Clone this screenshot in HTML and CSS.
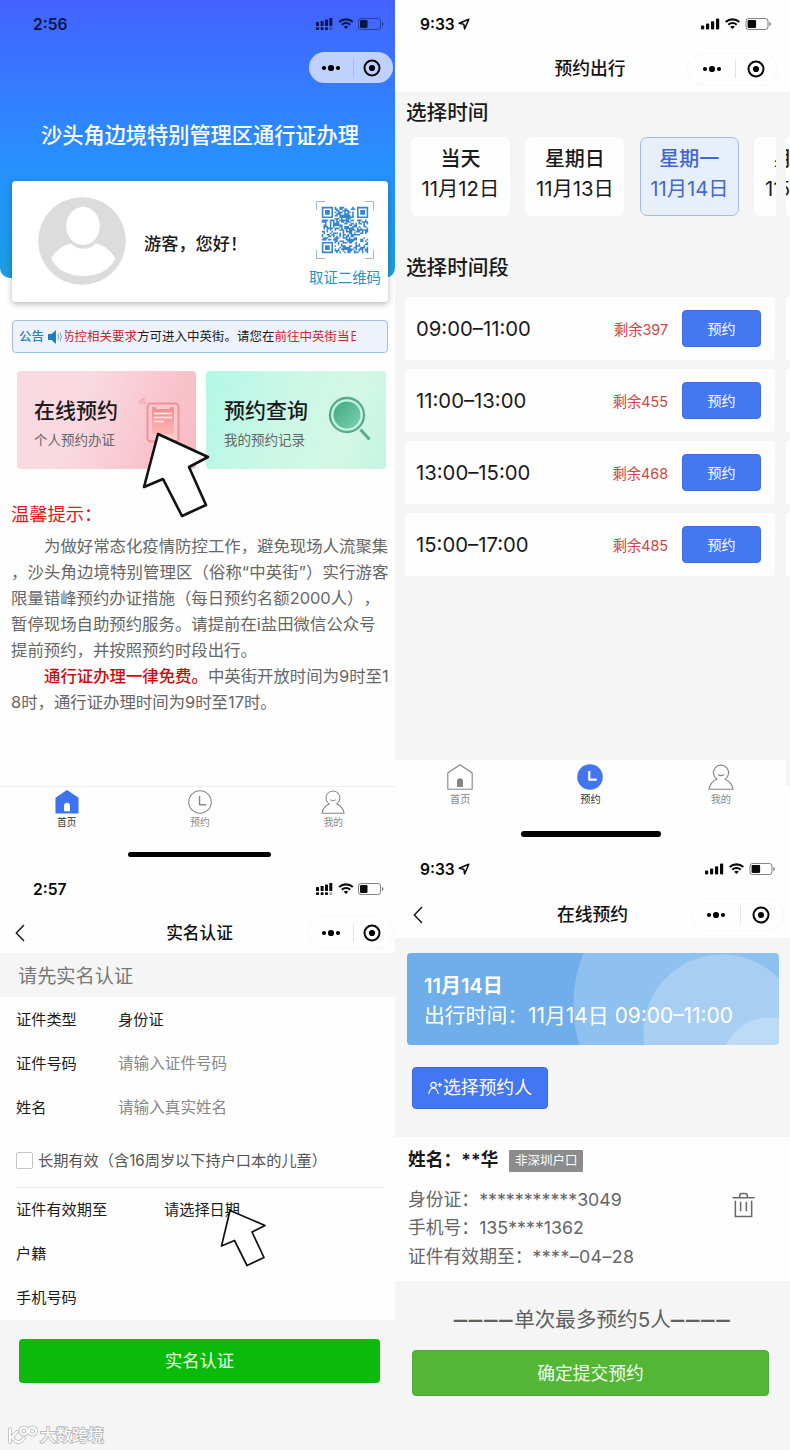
FILE: index.html
```html
<!DOCTYPE html>
<html lang="zh-CN">
<head>
<meta charset="utf-8">
<title>沙头角边境特别管理区通行证办理</title>
<link rel="stylesheet" href="styles.css">
</head>
<body>
<svg class="defs" aria-hidden="true">
  <symbol id="wifi" viewBox="0 0 16 12"><path d="M1.2 4.6a9.8 9.8 0 0 1 13.6 0" fill="none" stroke="currentColor" stroke-width="2.1"/><path d="M3.8 7.3a6 6 0 0 1 8.4 0" fill="none" stroke="currentColor" stroke-width="2"/><path d="M5.7 9.2a3.4 3.4 0 0 1 4.6 0L8 11.6z" fill="currentColor"/></symbol>
  <symbol id="status-dual" viewBox="0 0 68 14">
    <g fill="currentColor"><rect x="0" y="5" width="3" height="4" rx=".6"/><rect x="4.6" y="4" width="3" height="5" rx=".6"/><rect x="9" y="2.6" width="3" height="6.4" rx=".6"/><rect x="13.3" y="1" width="3" height="8" rx=".6"/><rect x="0" y="10.3" width="3" height="2.8" rx=".8"/><rect x="4.6" y="10.3" width="3" height="2.8" rx=".8"/><rect x="9" y="10.3" width="3" height="2.8" rx=".8"/><rect x="13.3" y="10.3" width="3" height="2.8" rx=".8" opacity=".35"/></g>
    <use href="#wifi" x="22" y="0.5" width="16" height="12"/>
    <rect x="42.5" y="1.5" width="22" height="11" rx="2.5" fill="none" stroke="currentColor" stroke-opacity=".5"/><rect x="44" y="3" width="7.5" height="8" rx="1.2" fill="currentColor"/><path d="M66 5v4q1.400-.6 1.400-2T66 5z" fill="currentColor" opacity=".6"/>
  </symbol>
  <symbol id="status-single" viewBox="0 0 70 14">
    <g fill="currentColor"><rect x="0" y="8.6" width="3.2" height="3.8" rx=".8"/><rect x="5" y="6.6" width="3.2" height="5.8" rx=".8"/><rect x="10" y="4.2" width="3.2" height="8.2" rx=".8"/><rect x="15" y="1.6" width="3.2" height="10.8" rx=".8"/></g>
    <use href="#wifi" x="23.5" y="0.5" width="16" height="12"/>
    <rect x="45" y="1.5" width="22" height="11" rx="2.5" fill="none" stroke="currentColor" stroke-opacity=".5"/><rect x="46.6" y="3" width="8.5" height="8" rx="1.2" fill="currentColor"/><path d="M68.4 5v4q1.400-.6 1.400-2t-1.400-2z" fill="currentColor" opacity=".6"/>
  </symbol>
  <symbol id="dots" viewBox="0 0 20 8"><circle cx="3" cy="4" r="2.1"/><circle cx="10" cy="4" r="3.1"/><circle cx="17" cy="4" r="2.1"/></symbol>
  <symbol id="target" viewBox="0 0 18 18"><circle cx="9" cy="9" r="7.5" fill="none" stroke="currentColor" stroke-width="2"/><circle cx="9" cy="9" r="3.1"/></symbol>
  <symbol id="back" viewBox="0 0 10 18"><path d="M9 1 1.3 9 9 17" fill="none" stroke="#111" stroke-width="1.4"/></symbol>
  <symbol id="locate" viewBox="0 0 12 12"><path d="M10.8 1.2 1.2 5.3l4.6.9.8 4.7z" fill="none" stroke="currentColor" stroke-width="1.5" stroke-linejoin="round"/></symbol>
  <symbol id="home-solid" viewBox="0 0 26 26"><path d="M13 0 .5 8.500V25q0 .500.500.500h24q.500 0 .500-.500V8.500z" fill="#3b74ee"/><path d="M9.800 23v-6a3.200 3.200 0 0 1 6.400 0v6z" fill="#fff"/></symbol>
  <symbol id="home-line" viewBox="0 0 26 26"><path d="M13 .8 .8 9v16.200h24.400V9z" fill="none" stroke="#858585" stroke-width="1.1" stroke-linejoin="round"/><path d="M10 23v-5.700a3 3 0 0 1 6 0V23z" fill="#858585"/></symbol>
  <symbol id="clock-line" viewBox="0 0 26 26"><circle cx="13" cy="13" r="12.2" fill="none" stroke="#858585" stroke-width="1.1"/><path d="M12.5 6.5V16h7" fill="none" stroke="#858585" stroke-width="1.5"/></symbol>
  <symbol id="clock-solid" viewBox="0 0 26 26"><circle cx="13" cy="13" r="12.8" fill="#4375ee"/><path d="M12.3 7v8.6h7.400" fill="none" stroke="#fff" stroke-width="2.1"/></symbol>
  <symbol id="me" viewBox="0 0 26 26"><path d="M9 15.200A7.600 7.600 0 1 1 17 15.200C21.500 17 24.300 20.700 25 25.200H1C1.700 20.700 4.500 17 9 15.200z" fill="none" stroke="#858585" stroke-width="1.1" stroke-linejoin="round"/><path d="M10 10.500q3 2.200 6 0" fill="none" stroke="#858585" stroke-width="1.100"/></symbol>
</svg>

<main class="board">
  <div class="column">
    <section class="phone phone-home">
      <header class="hero">
        <div class="status"><span class="time">2:56</span><svg class="ind-dual"><use href="#status-dual"/></svg></div>
        <div class="capsule-row"><div class="capsule tinted"><svg class="dots"><use href="#dots"/></svg><i></i><svg class="target"><use href="#target"/></svg></div></div>
        <h1 class="hero-title">沙头角边境特别管理区通行证办理</h1>
        <div class="user-card">
          <svg class="avatar" viewBox="0 0 88 88"><circle cx="44" cy="44" r="43.800" fill="#dcdcdc"/><ellipse cx="45" cy="29" rx="16.800" ry="19" fill="#fff"/><path d="M13 62c4-8 13-14.500 20-15.500 7 7 18 7 25 0 8 1.500 16 8 19.500 15.500-7 12-18 17-32 17S20 74 13 62z" fill="#fff"/></svg>
          <p class="hello">游客，您好！</p>
          <div class="qr-box"><svg class="qr" id="qr" viewBox="0 0 58 58"><path d="M.500 9V.500H9M49 .500h8.500V9M57.500 49v8.500H49M9 57.500H.500V49" fill="none" stroke="#9db8cf"/></svg><span>取证二维码</span></div>
        </div>
      </header>
      <div class="notice">
        <b>公告</b>
        <svg class="speaker" viewBox="0 0 15 16"><path d="M0 5h3.500L8 1v14l-4.500-4H0z" fill="#1b7fc0"/><path d="M9.800 5q2 3 0 6M12 3.500q3 4.500 0 9" fill="none" stroke="#6aa9d3"/></svg>
        <div class="marquee"><span><em>防控相关要求</em>方可进入中英街。请您在<em>前往中英街当日</em></span></div>
      </div>
      <div class="entries">
        <div class="entry pink"><div><h2>在线预约</h2><p>个人预约办证</p></div>
          <svg class="entry-icon" viewBox="0 0 50 50"><defs><linearGradient id="pg" x2="0" y2="1"><stop stop-color="#f58d92"/><stop offset="1" stop-color="#ffb4b4"/></linearGradient></defs><path d="M1 9q1-5 6-6M3.500 9q.5-3 3.500-4M6 9q0-1.500 2-2" fill="none" stroke="#e99aa5"/><rect x="9.500" y="8.500" width="31" height="38" rx="3.500" fill="#fbc9ce" stroke="#ee9299" stroke-width="2"/><path d="M14 12h3l2 2h12l2-2h3v27H14z" fill="url(#pg)"/><path d="M16 18.500h18M16 22.500h18M16 26.500h10" stroke="#fff0f0" stroke-width="1.300"/></svg></div>
        <div class="entry green"><div><h2>预约查询</h2><p>我的预约记录</p></div>
          <svg class="entry-icon lens" viewBox="0 0 44 44"><defs><linearGradient id="gg" x2="1" y2="1"><stop stop-color="#3fa981"/><stop offset="1" stop-color="#7fd0b0"/></linearGradient></defs><circle cx="20" cy="19" r="17" fill="#c5f4e1" stroke="#5aab90" stroke-width="2.300"/><circle cx="20" cy="19" r="13.500" fill="url(#gg)"/><path d="m33.500 33.500 9 10" stroke="#5aab90" stroke-width="3"/></svg></div>
      </div>
      <article class="tips">
        <h3>温馨提示：</h3>
        <p class="indent l1">为做好常态化疫情防控工作，避免现场人流聚集</p>
        <p class="l2">，沙头角边境特别管理区（俗称“中英街”）实行游客</p>
        <p>限量错峰预约办证措施（每日预约名额2000人），</p>
        <p>暂停现场自助预约服务。请提前在i盐田微信公众号</p>
        <p>提前预约，并按照预约时段出行。</p>
        <p class="indent"><strong>通行证办理一律免费。</strong>中英街开放时间为9时至1</p>
        <p>8时，通行证办理时间为9时至17时。</p>
      </article>
      <nav class="tabs">
        <a class="on"><svg><use href="#home-solid"/></svg>首页</a>
        <a><svg><use href="#clock-line"/></svg>预约</a>
        <a><svg><use href="#me"/></svg>我的</a>
      </nav>
      <div class="home-bar"></div>
      <svg class="pointer pointer-big" viewBox="0 0 70 88"><path d="M17 4 67 27 48 37 65 75 41 86 22 49 3 57z" fill="#fff" stroke="#111" stroke-width="2.600" stroke-linejoin="round"/></svg>
    </section>

    <section class="phone phone-auth">
      <div class="status"><span class="time">2:57</span><svg class="ind-dual"><use href="#status-dual"/></svg></div>
      <div class="navbar"><svg class="back"><use href="#back"/></svg><h2>实名认证</h2><div class="capsule"><svg class="dots"><use href="#dots"/></svg><i></i><svg class="target"><use href="#target"/></svg></div></div>
      <p class="strip">请先实名认证</p>
      <div class="form">
        <div class="field"><label>证件类型</label><span>身份证</span></div>
        <div class="field"><label>证件号码</label><span class="hint">请输入证件号码</span></div>
        <div class="field"><label>姓名</label><span class="hint">请输入真实姓名</span></div>
        <div class="check"><i></i><span>长期有效（含16周岁以下持户口本的儿童）</span></div>
        <div class="field wide"><label>证件有效期至</label><span>请选择日期</span></div>
        <div class="field"><label>户籍</label></div>
        <div class="field"><label>手机号码</label></div>
      </div>
      <div class="btn-auth">实名认证</div>
      <svg class="pointer pointer-small" viewBox="0 0 48 60"><path d="M11 2.500 46 17.500 33 24 45 49.500 28 57.500 15.500 32.500 2.500 38z" fill="#fff" stroke="#111" stroke-width="1.700" stroke-linejoin="round"/></svg>
      <div class="watermark"><svg viewBox="0 0 30 20"><g fill="none" stroke="#c2c2c2" stroke-width="3.800" stroke-linecap="round"><path d="M2 4v13M9 7l-5 5 3 4q6 3 9-3"/><circle cx="16" cy="6" r="3.600"/><circle cx="24.500" cy="6" r="3.600"/></g><g fill="none" stroke="#fff" stroke-width="2" stroke-linecap="round"><path d="M2 4v13M9 7l-5 5 3 4q6 3 9-3"/><circle cx="16" cy="6" r="3.600"/><circle cx="24.500" cy="6" r="3.600"/></g></svg><span>大数跨境</span></div>
    </section>
  </div>

  <div class="column">
    <section class="phone phone-slots">
      <div class="top">
        <div class="status"><span class="time">9:33</span><svg class="locate"><use href="#locate"/></svg><svg class="ind-single"><use href="#status-single"/></svg></div>
        <div class="navbar"><h2>预约出行</h2><div class="capsule"><svg class="dots"><use href="#dots"/></svg><i></i><svg class="target"><use href="#target"/></svg></div></div>
      </div>
      <h3 class="section-title">选择时间</h3>
      <div class="days-row">
        <div class="days">
          <div class="day"><b>当天</b><span>11月12日</span></div>
          <div class="day"><b>星期日</b><span>11月13日</span></div>
          <div class="day active"><b>星期一</b><span>11月14日</span></div>
          <div class="day"><b>星期二</b><span>11月15日</span></div>
        </div>
        <div class="day-edge"><b>期</b><span>5</span></div>
      </div>
      <h3 class="section-title second">选择时间段</h3>
      <div class="slots">
        <div class="slot"><time>09:00–11:00</time><span>剩余397</span><button>预约</button></div><i class="sliver"></i>
        <div class="slot"><time>11:00–13:00</time><span>剩余455</span><button>预约</button></div><i class="sliver"></i>
        <div class="slot"><time>13:00–15:00</time><span>剩余468</span><button>预约</button></div><i class="sliver"></i>
        <div class="slot"><time>15:00–17:00</time><span>剩余485</span><button>预约</button></div><i class="sliver"></i>
      </div>
      <nav class="tabs">
        <a><svg><use href="#home-line"/></svg>首页</a>
        <a class="on"><svg><use href="#clock-solid"/></svg>预约</a>
        <a><svg><use href="#me"/></svg>我的</a>
      </nav>
      <div class="home-bar"></div>
    </section>

    <section class="phone phone-book">
      <div class="top">
        <div class="status"><span class="time">9:33</span><svg class="locate"><use href="#locate"/></svg><svg class="ind-single"><use href="#status-single"/></svg></div>
        <div class="navbar"><svg class="back"><use href="#back"/></svg><h2>在线预约</h2><div class="capsule"><svg class="dots"><use href="#dots"/></svg><i></i><svg class="target"><use href="#target"/></svg></div></div>
      </div>
      <div class="banner"><b>11月14日</b><span>出行时间：<time>11月14日 09:00–11:00</time></span></div>
      <div class="btn-pick"><svg viewBox="0 0 15 14"><circle cx="5.500" cy="4" r="2.700" fill="none" stroke="#fff" stroke-width="1.200"/><path d="M.8 13q.7-5.500 4.700-6 4 .500 4.700 6M11.800 1.500v4.400M9.600 3.700H14" fill="none" stroke="#fff" stroke-width="1.200"/></svg>选择预约人</div>
      <div class="person">
        <div class="person-name"><b>姓名：**华</b><em>非深圳户口</em></div>
        <p>身份证：<span class="id">***********3049</span></p>
        <p>手机号：<span class="tel">135****1362</span></p>
        <p>证件有效期至：<span class="exp">****–04–28</span></p>
        <svg class="trash" viewBox="0 0 24 28"><path d="M.500 6.500h23M8 6V4.500A2.500 2.500 0 0 1 10.500 2h3A2.500 2.500 0 0 1 16 4.500V6M3.500 9.500V26h17V9.500M9 10.500v10M15 10.500v10" fill="none" stroke="#6a6a6a" stroke-width="1.600"/></svg>
      </div>
      <p class="limit"><i>––––</i>单次最多预约5人<i>––––</i></p>
      <div class="btn-submit">确定提交预约</div>
    </section>
  </div>
</main>
<script src="qr.js"></script>
</body>
</html>
```
FILE: styles.css
```css
* { box-sizing: border-box; }
body { margin: 0; background: #fefefe; font-family: Inter, "Noto Sans CJK SC", sans-serif; color: #1a1a1a; text-spacing-trim: space-all; }
h1, h2, h3, p { margin: 0; font-weight: 500; white-space: nowrap; }
em, i { font-style: normal; }
svg { display: block; flex: none; }
.defs { position: absolute; width: 0; height: 0; }
.board { display: grid; grid-template-columns: 395px 395px; height: 1450px; overflow: hidden; }
.column { overflow: hidden; }
.phone { position: relative; }

/* status and navigation bars */
.status { display: flex; align-items: center; height: 48px; padding: 0 11px 0 33px; color: #0a0a0a; }
.time { padding-top: 1px; font-size: 15.600px; font-weight: 600; line-height: 20px; }
.ind-dual { width: 68px; height: 14px; margin-left: auto; }
.ind-single { width: 70px; height: 14px; margin-left: auto; }
.locate { width: 12px; height: 12px; margin-left: 3px; }
.navbar { display: grid; align-items: center; height: 40px; }
.navbar > * { grid-area: 1 / 1; }
.navbar h2 { justify-self: center; font-size: 17.800px; line-height: 24px; color: #111; }
.navbar .capsule { justify-self: end; }
.capsule { display: flex; align-items: center; justify-content: space-between; width: 84px; height: 31px; padding: 0 12px; border-radius: 16px; color: #050505; box-shadow: 0 0 2px #ececec; }
.capsule i { width: 1px; height: 18px; background: rgba(0, 0, 0, .1); margin-left: 2px; }
.capsule.tinted { background: #bfd1fd; box-shadow: none; }
.dots { width: 20px; height: 8px; }
.target { width: 18px; height: 18px; }
.back { width: 10px; height: 18px; }

/* home */
.phone-home { height: 865px; }
.hero { height: 278px; border-radius: 0 0 10px 10px; background: linear-gradient(#4561ff 0, #3b70ff 50px, #2a8dff 150px, #2196f8 200px, #1d9de0 278px); }
.hero .status { color: #0b1546; }
.capsule-row { display: flex; justify-content: flex-end; align-items: center; height: 39px; padding-right: 2px; }
.hero-title { height: 94px; padding-top: 33px; text-align: center; font-size: 21.200px; line-height: 30px; color: #fff; padding-left: 5px; }
.user-card { display: grid; grid-template-columns: 88px 1fr 76px; align-items: center; height: 121px; margin: 0 7px 0 12px; width: 376px; padding: 0 3px 1px 26px; background: #fff; border-radius: 4px; box-shadow: 0 2px 6px rgba(0, 0, 0, .28); }
.avatar { width: 88px; height: 88px; }
.hello { padding: 6px 0 0 18px; font-size: 17.200px; line-height: 24px; }
.qr-box { display: flex; flex-direction: column; align-items: center; gap: 9px; white-space: nowrap; font-size: 14.400px; line-height: 20px; color: #2093c8; padding: 6px 4px 0 0; }
.qr { width: 58px; height: 58px; }
.notice { display: flex; align-items: center; width: 376px; height: 33px; margin: 42px 0 0 12px; padding: 0 6px; border: 1px solid #9fbfe0; border-radius: 4px; background: #eef3fb; font-size: 12.500px; line-height: 20px; white-space: nowrap; }
.notice b { width: 29px; font-weight: 500; color: #2b83bb; }
.speaker { width: 15px; height: 16px; margin-right: 2px; }
.marquee { width: 291px; overflow: hidden; }
.marquee span { display: block; margin-left: -3px; }
.marquee em { color: #d5232c; }
.entries { display: grid; grid-template-columns: 179px 180px; gap: 10px; margin: 18px 0 0 17px; }
.entry { display: flex; justify-content: space-between; height: 98px; padding: 25px 10px 0 17px; border-radius: 4px; }
.entry h2 { font-size: 21px; line-height: 30px; }
.entry p { margin-top: 4px; font-size: 13.500px; line-height: 20px; font-weight: 400; color: #666; }
.pink { background: linear-gradient(110deg, #fbd9e1 0 34%, #f9dbe3 34%, #f9c3cc 75%, #f7bbc3); }
.green { background: linear-gradient(110deg, #b2f8e4, #d0f7e8 50%, #ccf8e5 50%, #d5f7e6 75%, #c3f5e0); padding-left: 18px; }
.entry-icon { width: 50px; height: 50px; margin: -1px -2px 0 0; }
.entry-icon.lens { width: 44px; height: 44px; margin: 0 5px 0 0; }
.tips { height: 285px; margin-top: 31px; padding-left: 11px; }
.tips h3 { font-size: 18.300px; line-height: 28px; font-weight: 400; color: #dd1a1f; margin-bottom: 5px; }
.tips p { font-size: 16.400px; line-height: 26px; font-weight: 400; color: #666; }
.tips .indent { padding-left: 33px; }
.tips .l2 { letter-spacing: .100px; }
.tips strong { font-weight: 500; color: #cc0c12; }
.tabs { display: grid; grid-template-columns: 1fr 1fr 1fr; height: 60px; padding-top: 3px; }
.tabs a { display: flex; flex-direction: column; align-items: center; gap: 1px; font-size: 9.700px; line-height: 14px; color: #888; }
.tabs a.on { color: #333; }
.tabs svg { width: 24px; height: 24px; }
.phone-home .tabs { margin-top: 1px; padding-top: 3px; border-top: 1px solid #efefef; width: 400px; }
.phone-home .tabs a { gap: 2px; }
.home-bar { height: 5px; border-radius: 3px; background: #000; }
.phone-home .home-bar { width: 143px; margin: 6px 0 0 128px; }
.pointer { position: absolute; }
.pointer-big { left: 141px; top: 430px; width: 70px; height: 88px; }
.pointer-small { left: 219px; top: 343px; width: 48px; height: 60px; }

/* identity form */
.phone-auth { height: 585px; background: #f5f5f5; }
.phone-auth .status, .phone-auth .navbar { background: #fefefe; }
.phone-auth .navbar { height: 40px; padding: 0 2px 1px 15px; }
.phone-auth .navbar h2 { font-size: 16.700px; margin-left: -9px; }
.strip { height: 44px; padding-left: 18px; font-size: 19.200px; line-height: 46px; font-weight: 400; color: #777; }
.form { height: 323px; padding-top: 1px; background: #fefefe; font-size: 15.200px; }
.field { display: grid; grid-template-columns: 102px 1fr; align-items: center; height: 44px; padding-left: 16px; line-height: 24px; }
.field.wide { grid-template-columns: 148px 1fr; }
.hint { color: #888; font-size: 15.600px; }
.check { display: flex; align-items: center; gap: 5px; height: 58px; margin: 0 10px 0 16px; border-bottom: 1px solid #e8e8e8; color: #555; white-space: nowrap; }
.check i { width: 17px; height: 17px; margin-top: 4px; border: 1px solid #c5c5c5; border-radius: 2px; background: #fff; }
.btn-auth { width: 361px; height: 44px; margin: 19px 0 0 19px; border-radius: 4px; background: #0cba0c; color: #ecffe9; font-size: 17.300px; line-height: 44px; text-align: center; }
.watermark { display: flex; align-items: center; gap: 2px; margin: 40px 0 0 8px; font-size: 16px; line-height: 24px; color: #fff; }
.watermark svg { width: 30px; height: 20px; overflow: visible; }
.watermark span { -webkit-text-stroke: 2px #bdbdbd; paint-order: stroke fill; }

/* time slots */
.phone-slots { height: 845px; background: linear-gradient(#f5f5f5 786px, #fefefe 0); }
.top { background: #fefefe; }
.phone-slots .status { padding: 0 19px 0 25px; }
.phone-slots .top { height: 92px; }
.phone-slots .navbar { height: 42px; padding-right: 13px; }
.phone-slots .navbar h2 { padding-left: 8px; }
.phone-slots .capsule { width: 89px; padding: 0 12px 0 14px; }
.phone-book .capsule { width: 91px; padding: 0 13px 0 14px; }
.section-title { padding: 6px 0 0 11px; font-size: 20.600px; line-height: 30px; }
.days-row { display: flex; height: 79px; margin-top: 9px; padding-left: 16px; }
.days { display: flex; gap: 15.700px; width: 365px; overflow: hidden; }
.day { display: flex; flex-direction: column; align-items: center; flex: 0 0 98.800px; height: 79px; padding-top: 7px; border-radius: 7px; background: #fefefe; white-space: nowrap; }
.day b { font-size: 20px; font-weight: 500; line-height: 30px; }
.day span { font-size: 20.300px; line-height: 30px; }
.day.active { border: 1px solid #a3bcea; padding-top: 6px; background: #e7effb; color: #4268d0; }
.day-edge { display: flex; flex-direction: column; align-items: flex-end; width: 4px; height: 79px; margin-left: 10px; padding-top: 7px; overflow: hidden; border-radius: 4px 0 0 4px; background: #fefefe; }
.day-edge b { font-size: 20px; font-weight: 500; line-height: 30px; }
.day-edge span { font-size: 19.500px; line-height: 30px; }
.section-title.second { padding-top: 37px; }
.slots { display: grid; grid-template-columns: 370px 4px; column-gap: 11px; row-gap: 9px; height: 463px; margin-top: 14px; padding-left: 10px; align-content: start; }
.slot { display: flex; align-items: center; height: 63px; padding: 0 14px 0 11px; border-radius: 4px; background: #fefefe; }
.slot time { flex: 1; font-size: 20.300px; }
.slot span { font-size: 14.300px; color: #cf4546; margin-right: 14px; white-space: nowrap; }
.slot button { width: 79px; height: 37px; padding: 0; border: 1px solid #3d6dde; border-radius: 4px; background: #4478f3; color: #fff; font: 14px/34px Inter, "Noto Sans CJK SC", sans-serif; }
.sliver { background: #fefefe; }
.phone-slots .tabs { width: 391px; height: 71px; padding-top: 4px; background: #fefefe; }
.phone-slots .tabs svg { width: 26px; height: 26px; }
.phone-slots .tabs a { font-size: 10.200px; gap: 2px; }
.phone-slots .home-bar { width: 140px; height: 6px; margin-left: 126px; }

/* booking confirmation */
.phone-book { height: 605px; background: #f5f5f5; }
.phone-book .status { padding: 0 15px 0 25px; }
.phone-book .top { height: 93px; }
.phone-book .navbar { height: 43px; padding: 0 7px 0 18px; }
.phone-book .navbar h2 { margin-left: -11px; }
.banner { display: flex; flex-direction: column; width: 372px; height: 92px; margin: 15px 0 0 12px; padding: 18px 0 0 17px; border-radius: 4px; color: #fff; font-size: 20px; line-height: 30px; white-space: nowrap; background: radial-gradient(circle at 362px 112px, #bddbf6 0 47px, transparent 48px), radial-gradient(circle at 315px 80px, #a8cff3 0 78px, transparent 79px), radial-gradient(circle at 308px 52px, #8fc1f0 0 141px, transparent 142px), #70adeb; }
.banner b { font-weight: 600; }
.banner span { font-size: 20.800px; }
.banner time { font-size: 20.900px; }
.btn-pick { display: flex; align-items: center; gap: 0; width: 136px; height: 42px; margin: 22px 0 0 17px; padding-left: 15px; border: 1px solid #3c6ae0; border-radius: 4px; background: #4475f2; color: #fff; font-size: 17.800px; line-height: 24px; white-space: nowrap; }
.btn-pick svg { width: 15px; height: 14px; }
.person { position: relative; height: 144px; margin-top: 28px; padding: 9px 0 0 13px; background: #fefefe; }
.person-name { display: flex; align-items: center; gap: 11px; height: 30px; margin-bottom: 10px; font-size: 17.800px; }
.person-name b { font-weight: 600; padding-bottom: 6px; }
.person-name em { width: 74px; height: 22px; background: #8c8c8c; border-radius: 1px; color: #fff; font-size: 12.500px; line-height: 21px; text-align: center; }
.person p { font-size: 17.800px; line-height: 28.400px; font-weight: 400; color: #666; }
.exp { letter-spacing: .400px; }
.trash { position: absolute; left: 337px; top: 54px; width: 23px; height: 28px; }
.limit { display: flex; align-items: center; justify-content: center; height: 69px; padding-top: 8px; font-size: 20.600px; line-height: 30px; font-weight: 400; color: #606060; }
.limit i { font-size: 27px; letter-spacing: 1.600px; }
.btn-submit { width: 357px; height: 46px; margin-left: 17px; border: 1px solid #4fa939; border-radius: 4px; background: #54b637; color: #f0ffeb; font-size: 17.800px; line-height: 45px; text-align: center; }
```
FILE: qr.js
```js
// Fills the certificate code symbol with its module grid.
(function () {
  var n = 29, size = 46.4 / n, off = 5.8, d = '', seed = 7;
  function finder(r, c) {
    var m = Math.max(Math.abs(r - 3), Math.abs(c - 3));
    return m === 3 || m < 2;
  }
  for (var r = 0; r < n; r++) {
    for (var c = 0; c < n; c++) {
      seed = (seed * 1103515245 + 12345) % 2147483648;
      var on = (seed >> 16) % 100 < 54;
      var rr = r > n - 9 ? n - 1 - r : r, cc = c > n - 9 ? n - 1 - c : c;
      if (rr < 8 && cc < 8 && !(r > 20 && c > 20)) on = rr < 7 && cc < 7 && finder(rr, cc);
      if (on) d += 'M' + (off + c * size).toFixed(2) + ' ' + (off + r * size).toFixed(2) + 'h1.6v1.6h-1.6z';
    }
  }
  var p = document.createElementNS('http://www.w3.org/2000/svg', 'path');
  p.setAttribute('d', d);
  p.setAttribute('fill', '#3585d3');
  document.getElementById('qr').appendChild(p);
})();
```
